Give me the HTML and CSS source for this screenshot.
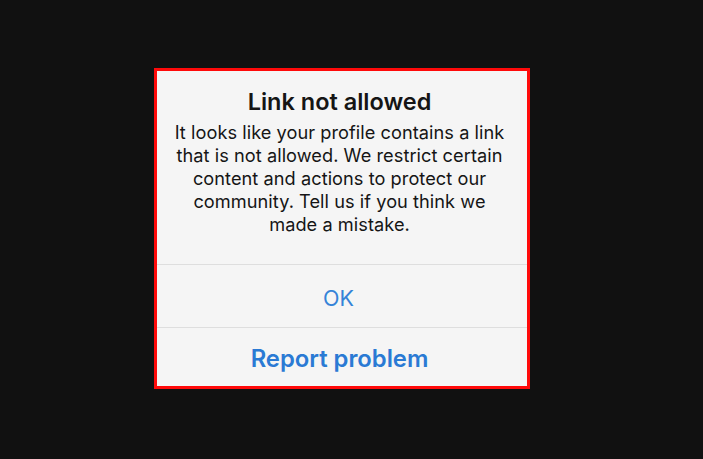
FILE: index.html
```html
<!DOCTYPE html>
<html>
<head>
<meta charset="utf-8">
<link rel="stylesheet" href="styles.css">
</head>
<body>
<div class="dialog">
  <div class="content">
    <div class="title">Link not allowed</div>
    <div class="message">It looks like your profile contains a link that is not allowed. We restrict certain content and actions to protect our community. Tell us if you think we made a mistake.</div>
  </div>
  <div class="action ok">OK</div>
  <div class="action report">Report problem</div>
</div>
</body>
</html>
```
FILE: styles.css
```css
html, body {
  margin: 0;
  padding: 0;
  background: #111111;
  height: 100%;
}
body {
  padding: 68px 0 0 154px;
  box-sizing: border-box;
  font-family: Inter, "Noto Sans", "Liberation Sans", sans-serif;
}
.dialog {
  width: 376px;
  height: 321px;
  box-sizing: border-box;
  border: 3px solid #ff0a0a;
  background: #f5f5f5;
  display: flex;
  flex-direction: column;
}
.content {
  height: 193px;
  box-sizing: border-box;
  padding: 16px 17px 0 12px;
  text-align: center;
  color: #151515;
}
.title {
  font-size: 23.5px;
  font-weight: 600;
  line-height: 29px;
  margin-bottom: 5px;
}
.message {
  font-size: 18.2px;
  line-height: 23px;
  letter-spacing: 0.05px;
}
.action {
  border-top: 1px solid #dedede;
  display: flex;
  align-items: center;
  justify-content: center;
  color: #3483d8;
  padding: 3px 5px 0 0;
  box-sizing: border-box;
}
.ok {
  height: 63px;
  font-size: 21.5px;
  padding-right: 7px;
}
.report {
  flex: 1;
  font-size: 23.8px;
  font-weight: 600;
  color: #2a7ad4;
}
```
